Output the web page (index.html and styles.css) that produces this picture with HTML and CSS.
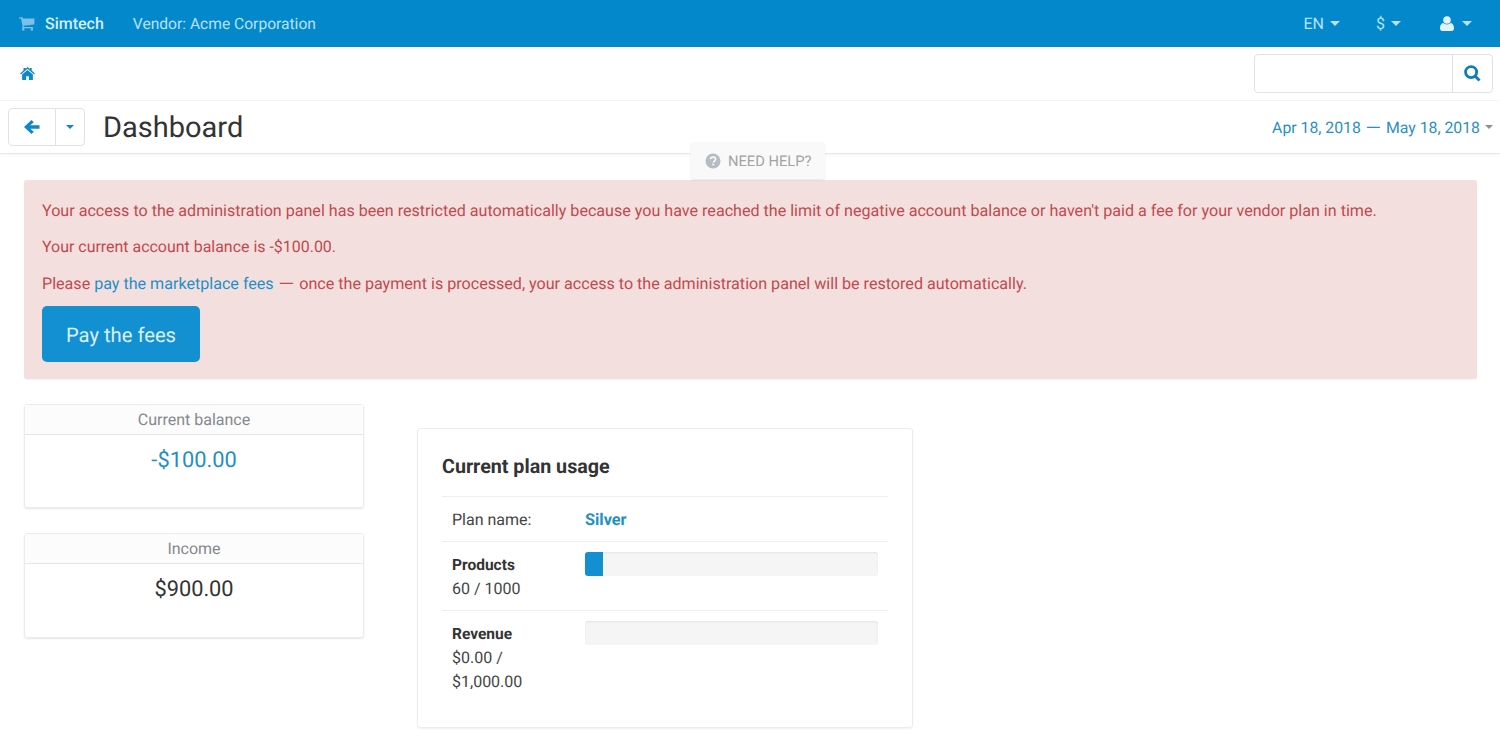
FILE: index.html
```html
<!DOCTYPE html>
<html lang="en">
<head>
<meta charset="utf-8">
<title>Dashboard</title>
<link rel="stylesheet" href="styles.css">
</head>
<body>
<header class="topbar">
  <div class="brand">
    <svg class="cart" viewBox="0 0 1664 1408" aria-hidden="true"><path d="M576 1280a128 128 0 1 1-256 0 128 128 0 0 1 256 0zm896 0a128 128 0 1 1-256 0 128 128 0 0 1 256 0zm128-1088v512q0 24-16.500 42.500T1543 768L499 890q13 60 13 70 0 16-24 64h920q26 0 45 19t19 45-19 45-45 19H384q-26 0-45-19t-19-45q0-11 8-31.500t16-36 21.500-40T381 955L204 132H64q-26 0-45-19T0 68t19-45T64 4h256q16 0 28.500 6.500t19.500 15.500 13 24.500 8 26 5.500 29.500 4.500 26h1201q26 0 45 19t19 45z"/></svg>
    <span class="brand-name">Simtech</span>
    <span class="vendor">Vendor: Acme Corporation</span>
  </div>
  <nav class="top-menu">
    <span class="top-item item-en">EN<i class="caret"></i></span>
    <span class="top-item item-cur">$<i class="caret"></i></span>
    <span class="top-item item-user">
      <svg class="user" viewBox="0 0 14 15" aria-hidden="true"><circle cx="7" cy="4" r="3.800"/><path d="M0 12.500C0 9.500 1.200 7.500 3.300 7.100 4.300 8 5.600 8.500 7 8.500s2.700-.5 3.700-1.400c2.100.4 3.300 2.400 3.300 5.400 0 1.500-1 2.500-2.400 2.500H2.400C1 15 0 14 0 12.500z"/></svg><i class="caret"></i>
    </span>
  </nav>
</header>

<div class="crumbs">
  <svg class="home" viewBox="0 0 16 14" aria-hidden="true"><path d="M8 0 5.900 1.800V1H3.700v2.700L0 7l.9 1L8 1.900 15.100 8l.9-1-3.500-3.100V1h-2v1.200L8 0zM8 3.300 2.200 8.200V14h4.300v-4h3v4h4.300V8.200L8 3.300z"/></svg>
  <div class="search">
    <span class="search-input"></span>
    <span class="search-btn">
      <svg viewBox="0 0 16 16" aria-hidden="true"><circle cx="6.700" cy="6.700" r="5.200"/><path d="m10.600 10.600 4 4"/></svg>
    </span>
  </div>
</div>

<div class="titlebar">
  <div class="btn-group">
    <span class="back">
      <svg viewBox="0 0 16 14" aria-hidden="true"><path d="M7.500 0 9.800 2.200 6.300 5.200H15.500V8.800H6.300L9.800 11.800 7.500 14 0 7z"/></svg>
    </span>
    <span class="drop"><i class="caret caret-blue"></i></span>
  </div>
  <h1>Dashboard</h1>
  <div class="dates"><span>Apr 18, 2018 <span class="dash">—</span> May 18, 2018</span><i class="caret caret-grey"></i></div>
</div>

<div class="help">
  <svg viewBox="0 0 16 16" aria-hidden="true"><circle cx="8" cy="8" r="7.500" fill="#b4bdc4"/><path d="M5.500 6.200C5.700 4.900 6.700 4.200 8 4.200c1.500 0 2.600.9 2.600 2.100 0 1.800-2.100 1.800-2.100 3.200" fill="none" stroke="#f8f8f8" stroke-width="1.700"/><rect x="7.300" y="10.600" width="1.900" height="1.800" fill="#f8f8f8"/></svg>
  NEED HELP?
</div>

<main class="content">
  <section class="alert">
    <p>Your access to the administration panel has been restricted automatically because you have reached the limit of negative account balance or haven't paid a fee for your vendor plan in time.</p>
    <p class="balance-line">Your current account balance is -$100.00.</p>
    <p>Please <a href="#">pay the marketplace fees</a> <span class="dash">—</span> once the payment is processed, your access to the administration panel will be restored automatically.</p>
    <a class="pay" href="#">Pay the fees</a>
  </section>

  <div class="columns">
    <div class="stats">
      <div class="stat">
        <div class="stat-head">Current balance</div>
        <div class="stat-value negative">-$100.00</div>
      </div>
      <div class="stat">
        <div class="stat-head">Income</div>
        <div class="stat-value">$900.00</div>
      </div>
    </div>

    <section class="usage">
      <h2>Current plan usage</h2>
      <div class="row row-plan">
        <div class="label">Plan name:</div>
        <div class="plan">Silver</div>
      </div>
      <div class="row">
        <div class="label"><b>Products</b><br>60 / 1000</div>
        <div class="bar"><div class="fill" style="width:6%"></div></div>
      </div>
      <div class="row">
        <div class="label"><b>Revenue</b><br>$0.00 /<br>$1,000.00</div>
        <div class="bar"></div>
      </div>
    </section>
  </div>
</main>
</body>
</html>
```
FILE: styles.css
```css
* { box-sizing: border-box; }
html, body { margin: 0; height: 746px; overflow: hidden; }
body { background: #fff; color: #333; font-family: Roboto, "Liberation Sans", sans-serif; font-size: 16px; position: relative; text-rendering: geometricPrecision; }

.caret { display: inline-block; width: 0; height: 0; border-left: 5px solid transparent; border-right: 5px solid transparent; border-top: 5px solid currentColor; }
.dash { display: inline-block; margin: 0 2.500px; transform: scaleX(1.250); }

.topbar { height: 47px; background: #0388cc; color: #b9e2f7; display: flex; align-items: center; justify-content: space-between; padding: 0 0 0 19px; }
.brand { display: flex; align-items: center; }
.cart { width: 16px; height: 14px; fill: #7cc0e6; margin-right: 10px; }
.brand-name { font-size: 16px; font-weight: 500; color: #d4eefb; margin-right: 29px; }
.vendor { font-size: 15.600px; }
.top-menu { display: flex; align-items: center; margin-top: -1px; }
.top-item { display: flex; align-items: center; gap: 6px; font-size: 16px; }
.item-en { margin-right: 36px; }
.item-cur { margin-right: 39px; }
.item-user { margin-right: 28px; gap: 8px; }
.user { width: 14px; height: 15px; fill: #e2f2fb; }

.crumbs { height: 54px; display: flex; align-items: center; justify-content: space-between; padding: 0 7px 0 20px; border-bottom: 1px solid #f6f6f6; }
.home { width: 15px; height: 13px; fill: #0d88c8; }
.search { width: 239px; height: 39px; display: flex; border: 1px solid #dfe3e6; border-radius: 4px; background: #fff; }
.search-input { flex: 1; }
.search-btn { width: 40px; border-left: 1px solid #dfe3e6; display: flex; align-items: center; justify-content: center; }
.search-btn svg { width: 17px; height: 17px; fill: none; stroke: #0d7fb8; stroke-width: 2.700; }

.titlebar { height: 53px; display: flex; align-items: center; padding: 0 7px 0 8px; border-bottom: 1px solid #e9e9e9; box-shadow: 0 1px 3px rgba(0,0,0,.05); }
.btn-group { display: flex; width: 77px; height: 38px; border: 1px solid #dfe3e6; border-radius: 4px; margin-right: 18px; margin-top: -1px; }
.back { width: 47px; display: flex; align-items: center; justify-content: center; border-right: 1px solid #dfe3e6; }
.back svg { width: 16px; height: 14px; fill: #0d88c8; }
.drop { flex: 1; display: flex; align-items: center; justify-content: center; }
.caret-blue { color: #0d88c8; }
.caret-blue, .caret-grey { border-left-width: 4.500px; border-right-width: 4.500px; border-top-width: 4.500px; }
.titlebar h1 { margin: 1px 0 0; font-size: 29px; font-weight: 400; color: #333; flex: 1; }
.dates { font-size: 15.800px; color: #2a8fc4; display: flex; align-items: center; gap: 5px; }
.caret-grey { color: #8f8f8f; }

.help { position: absolute; left: 691px; top: 142px; width: 134px; height: 37px; display: flex; align-items: center; gap: 7px; padding-left: 14px; background: #f9f9f9; border-radius: 3px; box-shadow: 0 1px 2px rgba(0,0,0,.1); color: #a3a3a3; font-size: 14.700px; }
.help svg { width: 16px; height: 16px; }

.content { padding: 26px 23px 0 24px; }
.alert { height: 199px; padding: 22px 18px 0; background: #f3dfde; border-radius: 3px; color: #c2494d; box-shadow: 0 1px 1px rgba(0,0,0,.05); font-size: 16.100px; }
.alert p { margin: 0 0 18.300px; line-height: 18px; }
.alert .balance-line { font-size: 15.950px; }
.alert p a { color: #1f8fc9; text-decoration: none; }
.pay { display: flex; align-items: center; justify-content: center; width: 158px; height: 56px; margin-top: -5px; padding-top: 2px; background: #1390d2; color: #d9f0fc; border-radius: 5px; font-size: 20.200px; text-decoration: none; }

.columns { display: flex; align-items: flex-start; margin-top: 24.500px; }
.stats { width: 340px; display: flex; flex-direction: column; gap: 25px; margin-right: 53px; }
.stat { height: 104.500px; border: 1px solid #ececec; border-radius: 3px; box-shadow: 0 1px 2px rgba(0,0,0,.1); text-align: center; }
.stat-head { height: 30px; line-height: 29px; background: #fcfcfc; border-bottom: 1px solid #e6e6e6; color: #85888d; }
.stat-value { margin-top: 13px; font-size: 21.800px; line-height: 26px; color: #333; }
.negative { color: #1f8fc4; }

.usage { width: 496px; height: 300px; margin-top: 24.500px; padding: 0 24px; border: 1px solid #ececec; border-radius: 3px; box-shadow: 0 1px 2px rgba(0,0,0,.06); }
.usage h2 { margin: 0; height: 68px; padding-top: 26px; font-size: 19.700px; line-height: 23px; font-weight: 700; color: #333; border-bottom: 1px solid #eee; }
.row { display: flex; padding: 10px 10px 9px; border-bottom: 1px solid #eee; line-height: 24px; color: #444; }
.row:last-child { border-bottom: 0; }
.label { width: 133px; padding-top: 1px; }
.label b { font-weight: 700; color: #333; font-size: 15.500px; }
.plan { padding-top: 1px; font-size: 16.300px; font-weight: 700; color: #1f8fc9; }
.row-plan { height: 45px; }
.bar { flex: 1; height: 24px; background: #f5f5f5; border-radius: 3px; box-shadow: inset 0 1px 2px rgba(0,0,0,.08); overflow: hidden; }
.fill { height: 100%; background: #1390d2; }
```
